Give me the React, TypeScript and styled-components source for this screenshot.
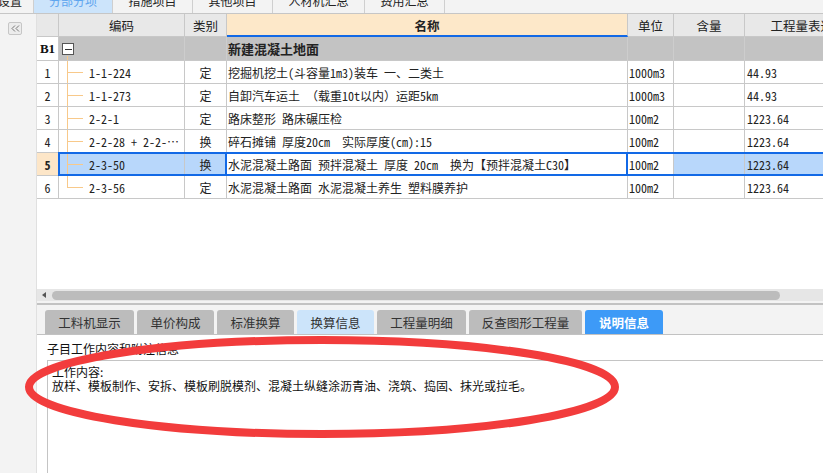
import React from "react";
import styled, { createGlobalStyle, css } from "styled-components";

const CN = `"Noto Sans CJK SC", "Noto Sans", sans-serif`;
const MONO = `"Noto Sans Mono CJK SC", "Noto Sans CJK SC", "Liberation Mono", monospace`;
const GRID = "#c8c8c8";
const BLUE = "#1269e6";
const SEL = "#b8d7fb";
const PEACH = "#fde6c8";

const GlobalStyle = createGlobalStyle`
  html, body { margin: 0; padding: 0; width: 823px; height: 473px; overflow: hidden; background: #fff; }
  body { font-family: ${CN}; font-size: 12px; color: #111; }
  * { box-sizing: border-box; }
`;

const Page = styled.div`
  position: relative;
  width: 823px;
  height: 473px;
  display: flex;
  flex-direction: column;
  overflow: hidden;
`;

/* ---------- top tabs ---------- */
const TopTabs = styled.div`
  height: 14px;
  flex: none;
  display: flex;
  background: #f3f3f3;
  border-bottom: 1px solid #c6c6c6;
  overflow: hidden;
`;

const TopTab = styled.div<{ $w: number; $active?: boolean; $end?: boolean }>`
  width: ${(p) => p.$w}px;
  height: 26px;
  margin-top: -13px;
  flex: none;
  display: flex;
  align-items: center;
  justify-content: ${(p) => (p.$end ? "flex-end" : "center")};
  padding-right: ${(p) => (p.$end ? 11 : 0)}px;
  border-right: 1px solid #cfcfcf;
  background: ${(p) => (p.$active ? "#cce4fb" : "#f3f3f3")};
  color: ${(p) => (p.$active ? "#5ea5ef" : "#222")};
  font-size: 12px;
  white-space: nowrap;
`;

/* ---------- body ---------- */
const Body = styled.div`
  flex: 1;
  min-height: 0;
  display: flex;
`;

const LeftPanel = styled.div`
  width: 37px;
  flex: none;
  background: #f3f3f3;
  border-right: 1px solid #e0e0e0;
  padding: 8px 0 0 8px;
`;

const CollapseBtn = styled.div`
  width: 14px;
  height: 13px;
  border: 1px solid #c6c6c6;
  border-radius: 2px;
  background: #ececec;
  display: flex;
  align-items: center;
  justify-content: center;
`;

const Main = styled.div`
  flex: 1;
  min-width: 0;
  display: flex;
  flex-direction: column;
  overflow: hidden;
`;

/* ---------- grid ---------- */
const GridArea = styled.div`
  height: 275px;
  flex: none;
  background: #fff;
  overflow: hidden;
`;

const COLS = "22px 126px 42px 401px 46px 71px 127px";

const GridRow = styled.div<{ $h: number }>`
  display: grid;
  grid-template-columns: ${COLS};
  height: ${(p) => p.$h}px;
  position: relative;
`;

const cellBase = css`
  border-right: 1px solid ${GRID};
  border-bottom: 1px solid ${GRID};
  display: flex;
  align-items: center;
  white-space: pre;
  overflow: hidden;
  position: relative;
`;

const HeadCell = styled.div<{ $hot?: boolean }>`
  ${cellBase};
  justify-content: center;
  background: ${(p) => (p.$hot ? "#fde8c9" : "#e8e8e8")};
  font-size: 12.5px;
  font-weight: ${(p) => (p.$hot ? 700 : 400)};
  color: #222;
  ${(p) =>
    p.$hot &&
    css`
      border-bottom: 2px solid ${BLUE};
      padding-top: 1px;
    `}
`;

const GroupCell = styled.div<{ $first?: boolean }>`
  ${cellBase};
  background: ${(p) => (p.$first ? "#fff" : "#c3c3c3")};
  border-right-color: ${(p) => (p.$first ? GRID : "#cdcdcd")};
  justify-content: ${(p) => (p.$first ? "center" : "flex-start")};
  font-weight: 700;
  ${(p) =>
    p.$first &&
    css`
      font-family: "Liberation Serif", serif;
      font-size: 13px;
    `}
`;

const GroupTitle = styled.span`
  padding-left: 1px;
  font-size: 13px;
  font-weight: 700;
  color: #222;
`;

const FoldBox = styled.div`
  width: 12px;
  height: 12px;
  margin: 1px 0 0 3px;
  border: 1px solid #555;
  background: #fff;
  display: flex;
  align-items: center;
  justify-content: center;
  &::before {
    content: "";
    width: 7px;
    height: 1px;
    background: #333;
  }
`;

const TreeStem = styled.div`
  position: absolute;
  left: 8px;
  top: 19px;
  bottom: 0;
  width: 1px;
  background: #f8c98a;
`;

const NumCell = styled.div<{ $sel?: boolean }>`
  ${cellBase};
  justify-content: center;
  background: ${(p) => (p.$sel ? PEACH : "#fff")};
  font-family: ${MONO};
  font-weight: ${(p) => (p.$sel ? 700 : 400)};
  color: #222;
`;

const CodeCell = styled.div<{ $sel?: boolean; $last?: boolean }>`
  ${cellBase};
  background: ${(p) => (p.$sel ? SEL : "#fff")};
  padding-left: 30px;
  font-family: ${MONO};
  color: #222;
  &::before {
    content: "";
    position: absolute;
    left: 8px;
    top: 0;
    height: ${(p) => (p.$last ? "50%" : "100%")};
    width: 1px;
    background: #f8c98a;
  }
  &::after {
    content: "";
    position: absolute;
    left: 8px;
    top: 50%;
    width: 16px;
    height: 1px;
    background: #f8c98a;
  }
`;

const TypeCell = styled.div<{ $sel?: boolean }>`
  ${cellBase};
  justify-content: center;
  background: ${(p) => (p.$sel ? SEL : "#fff")};
  color: #222;
`;

const NameCell = styled.div<{ $focus?: boolean }>`
  ${cellBase};
  overflow: visible;
  padding-left: 1px;
  font-family: ${MONO};
  color: #222;
  background: #fff;
  ${(p) =>
    p.$focus &&
    css`
      &::after {
        content: "";
        position: absolute;
        top: -1px;
        bottom: -1px;
        left: -2px;
        right: -1px;
        border-left: 2px solid ${BLUE};
        border-right: 2px solid ${BLUE};
      }
    `}
`;

const ValueCell = styled.div<{ $sel?: boolean; $pl: number }>`
  ${cellBase};
  padding-left: ${(p) => p.$pl}px;
  background: ${(p) => (p.$sel ? SEL : "#fff")};
  font-family: ${MONO};
  color: #222;
`;

const SelOutline = styled.div`
  position: absolute;
  left: 21px;
  right: 0;
  top: -1px;
  bottom: 0;
  border: 2px solid ${BLUE};
  border-right: none;
  pointer-events: none;
`;

/* ---------- scrollbar ---------- */
const HScroll = styled.div`
  height: 12px;
  flex: none;
  background: #e6e6e6;
  display: flex;
  align-items: center;
  padding-left: 5px;
  gap: 6px;
`;

const ScrollArrow = styled.div`
  width: 0;
  height: 0;
  border-top: 3px solid transparent;
  border-bottom: 3px solid transparent;
  border-right: 4px solid #555;
`;

const ScrollThumb = styled.div`
  width: 728px;
  height: 9px;
  border-radius: 5px;
  background: #bcbcbc;
`;

const Splitter = styled.div`
  height: 4px;
  flex: none;
  background: #f3f3f3;
  border-bottom: 2px solid #c2c2c2;
`;

/* ---------- bottom tabs ---------- */
const TabBar = styled.div`
  height: 30px;
  flex: none;
  background: #f3f3f3;
  border-bottom: 1px solid #c2c2c2;
  padding: 5px 0 0 8px;
  display: flex;
  gap: 3px;
`;

const Tab = styled.div<{ $w: number; $state?: "hover" | "active" }>`
  width: ${(p) => p.$w}px;
  height: 24px;
  flex: none;
  border-radius: 3px 3px 0 0;
  display: flex;
  align-items: center;
  justify-content: center;
  font-size: 12.5px;
  background: ${(p) =>
    p.$state === "active" ? "#3d9af7" : p.$state === "hover" ? "#cce4fa" : "#bcbcbc"};
  color: ${(p) => (p.$state === "active" ? "#fff" : "#333")};
  font-weight: ${(p) => (p.$state === "active" ? 700 : 400)};
`;

/* ---------- content ---------- */
const Content = styled.div`
  flex: 1;
  min-height: 0;
  background: #fff;
  padding: 6px 0 0 10px;
  display: flex;
  flex-direction: column;
`;

const Caption = styled.div`
  height: 16px;
  line-height: 16px;
  font-size: 12px;
  color: #111;
`;

const InfoBox = styled.div`
  flex: 1;
  margin-top: 3px;
  border: 1px solid #c4c4c4;
  border-right: none;
  border-bottom: none;
  padding: 4px 0 0 4px;
  font-size: 12px;
  line-height: 14px;
  color: #111;
`;

const Annotation = styled.svg`
  position: absolute;
  left: 0;
  top: 0;
  width: 823px;
  height: 473px;
  pointer-events: none;
`;

type RowData = { n: string; code: string; type: string; name: string; unit: string; qty: string; expr: string };

const rows: RowData[] = [
  { n: "1", code: "1-1-224", type: "定", name: "挖掘机挖土(斗容量1m3)装车 一、二类土", unit: "1000m3", qty: "", expr: "44.93" },
  { n: "2", code: "1-1-273", type: "定", name: "自卸汽车运土 （载重10t以内）运距5km", unit: "1000m3", qty: "", expr: "44.93" },
  { n: "3", code: "2-2-1", type: "定", name: "路床整形 路床碾压检", unit: "100m2", qty: "", expr: "1223.64" },
  { n: "4", code: "2-2-28 + 2-2-⋯", type: "换", name: "碎石摊铺 厚度20cm  实际厚度(cm):15", unit: "100m2", qty: "", expr: "1223.64" },
  { n: "5", code: "2-3-50", type: "换", name: "水泥混凝土路面 预拌混凝土 厚度 20cm  换为【预拌混凝土C30】", unit: "100m2", qty: "", expr: "1223.64" },
  { n: "6", code: "2-3-56", type: "定", name: "水泥混凝土路面 水泥混凝土养生 塑料膜养护", unit: "100m2", qty: "", expr: "1223.64" },
];

const topTabs = [
  { t: "设置", w: 34, end: true },
  { t: "分部分项", w: 79, active: true },
  { t: "措施项目", w: 80 },
  { t: "其他项目", w: 80 },
  { t: "人材机汇总", w: 92 },
  { t: "费用汇总", w: 80 },
];

const bottomTabs: { t: string; w: number; s?: "hover" | "active" }[] = [
  { t: "工料机显示", w: 89 },
  { t: "单价构成", w: 77 },
  { t: "标准换算", w: 77 },
  { t: "换算信息", w: 77, s: "hover" },
  { t: "工程量明细", w: 89 },
  { t: "反查图形工程量", w: 113 },
  { t: "说明信息", w: 78, s: "active" },
];

export default function App() {
  const SELECTED = 4;
  return (
    <Page>
      <GlobalStyle />
      <TopTabs>
        {topTabs.map((t) => (
          <TopTab key={t.t} $w={t.w} $active={t.active} $end={t.end}>
            {t.t}
          </TopTab>
        ))}
      </TopTabs>
      <Body>
        <LeftPanel>
          <CollapseBtn>
            <svg width="9" height="7" viewBox="0 0 9 7">
              <polyline points="4,0.5 1,3.5 4,6.5" fill="none" stroke="#777" strokeWidth="1" />
              <polyline points="8,0.5 5,3.5 8,6.5" fill="none" stroke="#777" strokeWidth="1" />
            </svg>
          </CollapseBtn>
        </LeftPanel>
        <Main>
          <GridArea>
            <GridRow $h={23}>
              <HeadCell />
              <HeadCell>编码</HeadCell>
              <HeadCell>类别</HeadCell>
              <HeadCell $hot>名称</HeadCell>
              <HeadCell>单位</HeadCell>
              <HeadCell>含量</HeadCell>
              <HeadCell>工程量表达式</HeadCell>
            </GridRow>
            <GridRow $h={24}>
              <GroupCell $first>B1</GroupCell>
              <GroupCell>
                <FoldBox />
                <TreeStem />
              </GroupCell>
              <GroupCell />
              <GroupCell>
                <GroupTitle>新建混凝土地面</GroupTitle>
              </GroupCell>
              <GroupCell />
              <GroupCell />
              <GroupCell />
            </GridRow>
            {rows.map((r, i) => {
              const sel = i === SELECTED;
              return (
                <GridRow $h={23} key={r.n}>
                  <NumCell $sel={sel}>{r.n}</NumCell>
                  <CodeCell $sel={sel} $last={i === rows.length - 1}>
                    {r.code}
                  </CodeCell>
                  <TypeCell $sel={sel}>{r.type}</TypeCell>
                  <NameCell $focus={sel}>{r.name}</NameCell>
                  <ValueCell $pl={1}>{r.unit}</ValueCell>
                  <ValueCell $pl={1} $sel={sel}>
                    {r.qty}
                  </ValueCell>
                  <ValueCell $pl={2} $sel={sel}>
                    {r.expr}
                  </ValueCell>
                  {sel && <SelOutline />}
                </GridRow>
              );
            })}
          </GridArea>
          <HScroll>
            <ScrollArrow />
            <ScrollThumb />
          </HScroll>
          <Splitter />
          <TabBar>
            {bottomTabs.map((t) => (
              <Tab key={t.t} $w={t.w} $state={t.s}>
                {t.t}
              </Tab>
            ))}
          </TabBar>
          <Content>
            <Caption>子目工作内容和附注信息</Caption>
            <InfoBox>
              <div>工作内容:</div>
              <div>放样、模板制作、安拆、模板刷脱模剂、混凝土纵缝涂沥青油、浇筑、捣固、抹光或拉毛。</div>
            </InfoBox>
          </Content>
        </Main>
      </Body>
      <Annotation viewBox="0 0 823 473">
        <ellipse cx="322" cy="387" rx="293" ry="47" fill="none" stroke="#f23c3c" strokeWidth="8" />
      </Annotation>
    </Page>
  );
}
